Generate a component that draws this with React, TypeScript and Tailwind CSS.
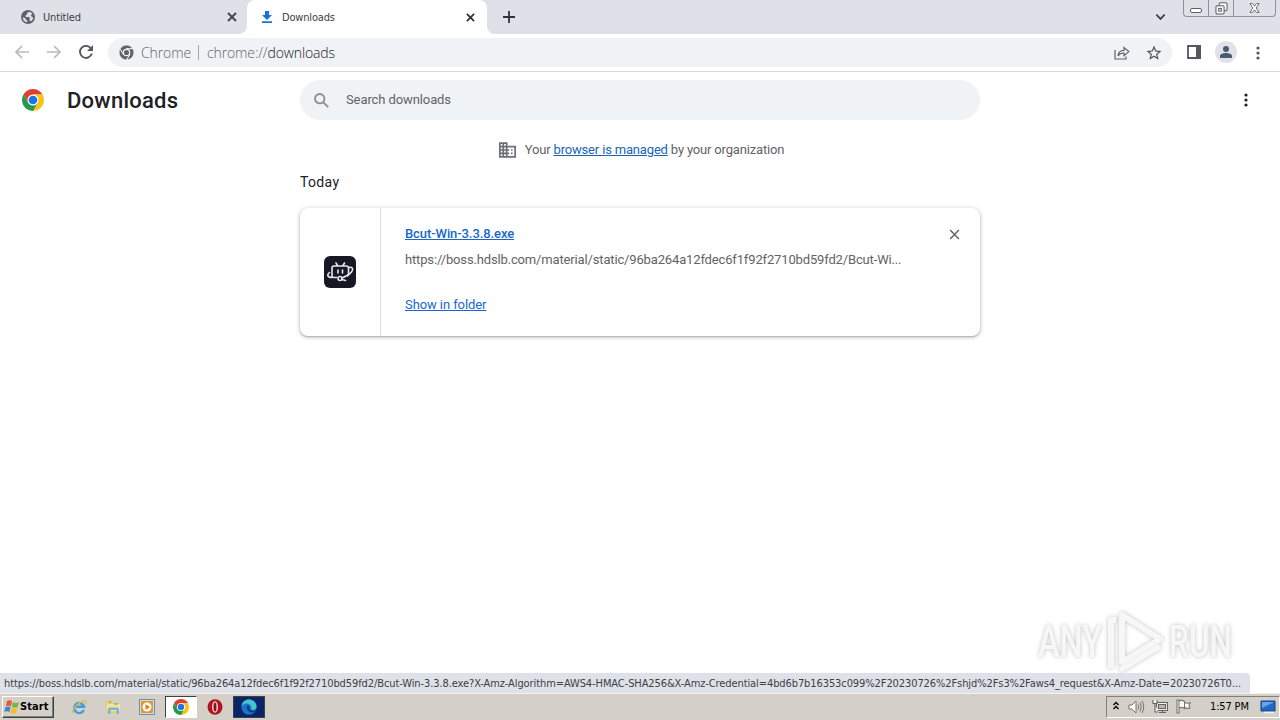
import React, { ReactNode } from 'react';

const SOURCE_URL = 'https://boss.hdslb.com/material/static/96ba264a12fdec6f1f92f2710bd59fd2/Bcut-Wi...';
const STATUS_URL =
  'https://boss.hdslb.com/material/static/96ba264a12fdec6f1f92f2710bd59fd2/Bcut-Win-3.3.8.exe?X-Amz-Algorithm=AWS4-HMAC-SHA256&X-Amz-Credential=4bd6b7b16353c099%2F20230726%2Fshjd%2Fs3%2Faws4_request&X-Amz-Date=20230726T0...';

const ChromeLogo: React.FC<{ className?: string; mono?: boolean }> = ({ className = '', mono }) => {
  const colors = mono ? ['#5f6368', '#5f6368', '#5f6368', '#5f6368'] : ['#dd3f31', '#fbc116', '#23994a', '#1a73e8'];
  const gap = mono ? '#f1f3f4' : 'none';
  const blade = 'M4.95 13A22 22 0 0 1 43.05 13H24L14.47 29.5Z';
  return (
    <svg viewBox="2 2 44 44" className={className}>
      <path d={blade} fill={colors[0]} stroke={gap} strokeWidth="2.5" />
      <path d={blade} fill={colors[1]} stroke={gap} strokeWidth="2.5" transform="rotate(120 24 24)" />
      <path d={blade} fill={colors[2]} stroke={gap} strokeWidth="2.5" transform="rotate(240 24 24)" />
      <circle cx="24" cy="24" r="11" fill={mono ? '#f1f3f4' : '#fff'} />
      <circle cx="24" cy="24" r={mono ? 7.5 : 8.7} fill={colors[3]} />
    </svg>
  );
};

const Cross: React.FC<{ className?: string; width?: number }> = ({ className = '', width = 2 }) => (
  <svg viewBox="0 0 10 10" className={className} fill="none" stroke="currentColor" strokeWidth={width}>
    <path d="M1 1L9 9M9 1L1 9" />
  </svg>
);

const Dots: React.FC<{ className?: string }> = ({ className = '' }) => (
  <svg viewBox="0 0 4 14" className={className} fill="currentColor">
    <circle cx="2" cy="2" r="1.6" />
    <circle cx="2" cy="7" r="1.6" />
    <circle cx="2" cy="12" r="1.6" />
  </svg>
);

const TabStrip = () => (
  <div className="relative flex h-[34px] shrink-0 bg-[#dee1e8] font-['DejaVu_Sans_Condensed','DejaVu_Sans',sans-serif] text-[11px] text-[#3c4043]">
    <div className="flex w-[247px] items-center pl-[21px] pr-[10px]">
      <svg viewBox="0 0 14 14" className="h-[14px] w-[14px]">
        <circle cx="7" cy="7" r="7" fill="#5f6368" />
        <path d="M8.2 1.7L6 3.3V4.6L4.4 5.5 4.8 7H8L9 8.5 8.3 10.2 10 11.3A5.4 5.4 0 0 0 12.3 7.5L10.6 6.8 9.8 5 11.5 3.9A5.4 5.4 0 0 0 8.2 1.7ZM1.7 7.3A5.3 5.3 0 0 0 6.4 12.3L6.3 10.7 4.6 9.5V8.3Z" fill="#dee1e8" />
      </svg>
      <span className="ml-2 flex-1 pt-[2px] tracking-[-0.15px]">Untitled</span>
      <Cross className="h-[10px] w-[10px] text-[#45494d]" />
    </div>
    <div className="relative flex w-[240px] items-center rounded-t-lg bg-white pl-[14px] pr-[12px]">
      <svg viewBox="0 0 8 8" className="absolute bottom-0 -left-2 h-2 w-2">
        <path d="M8 0V8H0A8 8 0 0 0 8 0Z" fill="#fff" />
      </svg>
      <svg viewBox="0 0 12 12" className="h-3 w-3" fill="#1a73d9">
        <path d="M4 0H8V4H11L6 9L1 4H4ZM1 10.3H11V12H1Z" />
      </svg>
      <span className="ml-[9px] flex-1 pt-[2px] tracking-[-0.18px]">Downloads</span>
      <Cross className="h-[9px] w-[9px] text-[#303338]" />
      <svg viewBox="0 0 8 8" className="absolute -right-2 bottom-0 h-2 w-2">
        <path d="M0 0V8H8A8 8 0 0 1 0 0Z" fill="#fff" />
      </svg>
    </div>
    <svg viewBox="0 0 12 12" className="mt-[11px] ml-4 h-3 w-3" fill="none" stroke="#2f3237" strokeWidth="1.8">
      <path d="M6 0V12M0 6H12" />
    </svg>
    <svg viewBox="0 0 12 8" className="mt-[13px] mr-[17px] ml-auto h-[8px] w-[11px]" fill="none" stroke="#3c4043" strokeWidth="2">
      <path d="M1.5 1.5L6 6L10.5 1.5" />
    </svg>
    <div className="mr-1 flex h-[17px] w-[93px] rounded-b-[4px] border border-t-0 border-[#8e9299]">
      <div className="flex w-[25px] justify-center border-r border-[#8e9299]">
        <span className="mt-[8px] h-[5px] w-3 rounded-[2px] border border-[#5d6167] bg-white" />
      </div>
      <div className="flex w-[25px] justify-center border-r border-[#8e9299]">
        <svg viewBox="0 0 14 14" className="mt-[2px] h-[13px] w-[13px]" fill="#f4f5f7" stroke="#5d6167" strokeWidth="1.1">
          <rect x="4.5" y="0.8" width="8.5" height="8.5" rx="1.3" />
          <rect x="1" y="4" width="8.8" height="8.8" rx="1.3" />
          <rect x="4" y="7" width="2.8" height="2.8" />
        </svg>
      </div>
      <div className="flex flex-1 justify-center">
        <svg viewBox="0 0 12 11" className="mt-[3px] h-[10px] w-[11px]" fill="#fff" stroke="#5d6167" strokeWidth="1">
          <path d="M1 .7H4L6 3.3 8 .7H11L7.9 5.5 11 10.3H8L6 7.7 4 10.3H1L4.1 5.5Z" />
        </svg>
      </div>
    </div>
  </div>
);

const Toolbar = () => (
  <div className="flex h-[38px] shrink-0 items-center border-b border-[#d8dadc] bg-white">
    <svg viewBox="0 0 14 14" className="-mt-px ml-[15px] h-[14px] w-[14px]" fill="none" stroke="#b8babd" strokeWidth="1.7">
      <path d="M14 7H1.5M7 1L1 7L7 13" />
    </svg>
    <svg viewBox="0 0 14 14" className="-mt-px ml-[18px] h-[14px] w-[14px]" fill="none" stroke="#b8babd" strokeWidth="1.7">
      <path d="M0 7H12.5M7 1L13 7L7 13" />
    </svg>
    <svg viewBox="0 0 14 14" className="-mt-px ml-[18px] h-[14px] w-[14px]">
      <path d="M11.6 3A6 6 0 1 0 12.8 8.6" fill="none" stroke="#54585d" strokeWidth="1.9" />
      <path d="M14 0V6H8Z" fill="#54585d" />
    </svg>
    <div className="ml-[15px] flex h-[29px] w-[1064px] items-center rounded-full bg-[#f0f3f5] pl-[11px] font-['Open_Sans','Noto_Sans',sans-serif] text-[14px] font-light text-[#5f6368]">
      <ChromeLogo mono className="h-[15px] w-[15px]" />
      <span className="ml-[7px] w-[50px] tracking-[-0.1px] whitespace-nowrap">Chrome</span>
      <span className="ml-[7px] h-[15px] w-px bg-[#a5a8ac]" />
      <span className="ml-2 flex-1 tracking-[-0.12px]">
        chrome://<span className="text-[#202124]">downloads</span>
      </span>
      <svg viewBox="0 0 16 14" className="h-[14px] w-4" fill="none" stroke="#5f6368" strokeWidth="1.2">
        <path d="M1 4V13H12V10.5M4 10C4.3 6.5 6.5 4.5 10 4.4V1.5L14.8 5.6 10 9.6V7C7.3 7 5.3 8 4 10Z" />
      </svg>
      <svg viewBox="0 0 24 24" className="ml-[15px] mr-[9px] h-[18px] w-[18px]" fill="#4f5358">
        <path d="M22 9.24l-7.19-.62L12 2 9.19 8.63 2 9.24l5.46 4.73L5.82 21 12 17.27 18.18 21l-1.63-7.03L22 9.24zM12 15.4l-3.76 2.27 1-4.28-3.32-2.88 4.38-.38L12 6.1l1.71 4.04 4.38.38-3.32 2.88 1 4.28L12 15.4z" />
      </svg>
    </div>
    <svg viewBox="0 0 14 14" className="-mt-px ml-[15px] h-[14px] w-[14px]">
      <path d="M1 1H13V13H1Z" fill="none" stroke="#54585d" strokeWidth="1.8" />
      <path d="M9 0H14V14H9Z" fill="#54585d" />
    </svg>
    <div className="-mt-px ml-[14px] flex h-[22px] w-[22px] items-center justify-center rounded-full bg-[#dfe2e6]">
      <svg viewBox="0 0 12 12" className="h-3 w-3" fill="#4c5a73">
        <circle cx="6" cy="3" r="3" />
        <path d="M0 12V10C0 8 3 7 6 7S12 8 12 10V12Z" />
      </svg>
    </div>
    <Dots className="ml-[19px] h-[14px] w-1 text-[#54585d]" />
  </div>
);

const DownloadCard = () => (
  <div className="mt-[15px] flex h-32 rounded-lg bg-white shadow-[0_1px_2px_rgba(60,64,67,0.35),0_1px_4px_1px_rgba(60,64,67,0.18)]">
    <div className="flex w-[81px] items-center justify-center border-r border-[#dadce0]">
      <svg viewBox="0 0 32 32" className="h-8 w-8" fill="none" stroke="#e8e9ef" strokeWidth="1.6" strokeLinecap="round" strokeLinejoin="round">
        <rect width="32" height="32" rx="6" fill="#171824" stroke="none" />
        <path d="M12 7L13.5 9.5M20.500 7L19 9.5M12.500 21.500H10Q8 21.500 8 19.500V12Q8 10 10 10H22Q24.500 10 24.500 12V18Q24.500 19.500 23.500 20M14 14V17M18.500 14V17" />
        <path d="M5.500 16.500C2.500 19 3.500 21.500 8 21.500M25 11.500C29 10.500 29.500 13.500 27.500 16C26 18 24 19.500 21 20.500" />
        <circle cx="16" cy="22.500" r="2" />
        <path d="M18 22L21 20.500M18 23.500L21.500 24.500" />
      </svg>
    </div>
    <div className="flex flex-1 flex-col pl-6 text-[13px]">
      <div className="flex h-[52px] items-center justify-between pr-[20px]">
        <a className="font-medium tracking-[-0.09px] text-[#1967c8] underline">Bcut-Win-3.3.8.exe</a>
        <Cross width={1.3} className="h-[11px] w-[11px] text-[#5f6368]" />
      </div>
      <span className="-mt-2 h-5 leading-[16px] tracking-[-0.15px] whitespace-nowrap text-[#5f6368]">{SOURCE_URL}</span>
      <a className="mt-[25px] self-start leading-[16px] tracking-[-0.09px] text-[#1967d2] underline">Show in folder</a>
    </div>
  </div>
);

const DownloadsPage = () => (
  <main className="relative flex-1 bg-white font-['Roboto',sans-serif]">
    <header className="flex h-14 items-center">
      <div className="flex w-[300px] items-center pl-[22px]">
        <ChromeLogo className="h-[22px] w-[22px]" />
        <h1 className="ml-[23px] text-[22px] font-medium tracking-[0.25px] text-[#202124]">Downloads</h1>
      </div>
      <div className="flex h-10 w-[680px] items-center rounded-full bg-[#f0f3f5] pl-[14px]">
        <svg viewBox="0 0 15 15" className="h-[15px] w-[15px]" fill="none" stroke="#8d9195" strokeWidth="1.9">
          <circle cx="5.700" cy="5.700" r="4.700" />
          <path d="M9 9L14.200 14.200" />
        </svg>
        <span className="ml-[17px] text-[13px] tracking-[-0.1px] text-[#5f6368]">Search downloads</span>
      </div>
      <Dots className="mr-8 ml-auto h-[14px] w-1 text-[#202124]" />
    </header>
    <div className="mx-auto w-[680px]">
      <div className="flex h-11 items-center justify-center pl-[3px] text-[13px] tracking-[-0.17px] text-[#5f6368]">
        <svg viewBox="2 3 20 18" className="mr-[9px] h-[16px] w-[17px]" fill="#6c7075">
          <path d="M12 7V3H2v18h20V7H12zM6 19H4v-2h2v2zm0-4H4v-2h2v2zm0-4H4V9h2v2zm0-4H4V5h2v2zm4 12H8v-2h2v2zm0-4H8v-2h2v2zm0-4H8V9h2v2zm0-4H8V5h2v2zm10 12h-8v-2h2v-2h-2v-2h2v-2h-2V9h8v10zm-2-8h-2v2h2v-2zm0 4h-2v2h2v-2z" />
        </svg>
        <span className="whitespace-pre">Your <a className="text-[#1a64b8] underline">browser is managed</a> by your organization</span>
      </div>
      <h2 className="h-[21px] text-[14px] leading-[21px] font-normal tracking-[0.35px] text-[#202124]">Today</h2>
      <DownloadCard />
    </div>

    {/* watermark and link status float over the page */}
    <svg viewBox="0 0 210 68" className="absolute right-[38px] bottom-[16px] h-[68px] w-[210px] overflow-visible drop-shadow-[0_0_2px_rgba(0,0,0,0.25)]">
      <g fill="#f7f7f7" fontFamily="Roboto, sans-serif" fontSize="45" fontWeight="500">
        <text x="6" y="48" textLength="64" lengthAdjust="spacingAndGlyphs">ANY</text>
        <text x="137" y="48" textLength="63" lengthAdjust="spacingAndGlyphs">RUN</text>
      </g>
      <g fill="none" stroke="#f7f7f7" strokeWidth="6" strokeLinejoin="round">
        <path d="M90 6L128 30L90 53Z" />
        <path d="M84 11H79V59M88 61L128 37" />
      </g>
    </svg>
    <div className="absolute bottom-0 left-0 h-5 w-[1250px] overflow-hidden rounded-tr bg-[#dee1e8] pl-1 font-['DejaVu_Sans_Condensed','DejaVu_Sans',sans-serif] text-[11px] leading-[21px] tracking-[-0.093px] whitespace-nowrap text-[#3c4043]">
      {STATUS_URL}
    </div>
  </main>
);

const TaskItem: React.FC<{ children: ReactNode; className?: string }> = ({ children, className = '' }) => (
  <div className={`flex h-[22px] w-8 items-center justify-center border ${className}`}>{children}</div>
);

const Taskbar = () => (
  <footer className="flex h-[27px] shrink-0 items-center border-t border-[#f5f3ef] bg-[#d4d0c8] pb-px pl-[2px]">
    <div className="flex h-[22px] w-[52px] items-center border border-t-white border-r-[#404040] border-b-[#404040] border-l-white pl-[1px] shadow-[inset_-1px_-1px_0_#808080]">
      <svg viewBox="0 0 16 16" className="h-4 w-4 shrink-0">
        <path d="M3 2Q6 .5 8 2.500L6.800 7.300Q4.500 5.800 1.800 7Z" fill="#e9592b" />
        <path d="M9 3Q12 4.800 15 3L13.600 8Q11 9.300 7.800 7.700Z" fill="#76b843" />
        <path d="M1.500 8Q4.500 6.800 6.500 8.300L5.300 13Q3 11.500.200 12.800Z" fill="#3a86d0" />
        <path d="M7.500 8.800Q10.500 10.300 13.300 9L12 14Q9 15.300 6.200 13.700Z" fill="#f6bd2b" />
      </svg>
      <span className="pt-[2px] font-['DejaVu_Sans_Condensed','DejaVu_Sans',sans-serif] text-[11px] font-bold tracking-[0.1px] text-black">Start</span>
    </div>
    <TaskItem className="ml-[9px] border-transparent">
      <svg viewBox="0 0 16 16" className="h-4 w-4" fill="none">
        <path d="M12.800 11A5 5 0 1 1 13 7.700H5" stroke="#3ca0dd" strokeWidth="2.400" />
        <path d="M2 14C-.500 11 9 1.500 14 1.800C15.500 2 15 4 14 5.500" stroke="#e5bb45" strokeWidth="1.200" />
      </svg>
    </TaskItem>
    <TaskItem className="ml-[2px] border-transparent">
      <svg viewBox="0 0 16 16" className="h-4 w-4">
        <path d="M1 2H7L8 4H14V14H1Z" fill="#ebcc6b" />
        <path d="M2 5H15V12H2Z" fill="#f6e29a" />
        <path d="M3 15V10Q3 8.500 5 8.500H12Q14 8.500 14 10V15H11.500V11H5.500V15Z" fill="#75b8de" />
        <path d="M4 3H6M9 5H13" stroke="#58a566" />
      </svg>
    </TaskItem>
    <TaskItem className="ml-[2px] border-transparent">
      <svg viewBox="0 0 16 16" className="h-4 w-4">
        <rect x=".5" y=".5" width="15" height="15" fill="#c6e0f2" stroke="#5f93bb" />
        <rect x="2" y="2" width="12" height="12" rx="1" fill="#f29321" />
        <circle cx="8" cy="8" r="4.500" fill="#fff" />
        <path d="M6.500 5.300L11 8L6.500 10.700Z" fill="#e47514" />
      </svg>
    </TaskItem>
    <TaskItem className="ml-[2px] border-t-[#404040] border-r-white border-b-white border-l-[#404040] bg-white">
      <ChromeLogo className="h-4 w-4" />
    </TaskItem>
    <TaskItem className="ml-[2px] border-transparent">
      <svg viewBox="0 0 16 16" className="h-4 w-4">
        <ellipse cx="8" cy="8" rx="7.500" ry="7.700" fill="#b5121f" />
        <ellipse cx="8" cy="8" rx="3" ry="5.800" fill="#e8dedc" />
        <ellipse cx="8" cy="8" rx="1.500" ry="4.600" fill="#8f1019" />
      </svg>
    </TaskItem>
    <TaskItem className="ml-[2px] border-[#404040] bg-[#0a246a]">
      <svg viewBox="0 0 16 16" className="h-4 w-4">
        <circle cx="8" cy="8" r="7.700" fill="#1975c5" />
        <path d="M.600 7.500C1 2.500 4.500.500 8 .500C13 .500 15.500 4.500 15.500 7.500C15.500 10 13 11.500 10 10.500C11.500 7 8.500 4.500 5.500 4.500C3.500 4.500 1.500 5.500.600 7.500Z" fill="#43c5cb" />
        <path d="M6 7C5 10 7 13.500 12.500 13.500C14 12.500 14.500 11.500 14.500 11C12 12.500 8.500 11.500 8.500 8.500C8.500 6.500 6.500 6 6 7Z" fill="#0b3c84" />
      </svg>
    </TaskItem>
    <div className="ml-auto flex h-[22px] w-[174px] items-center border border-t-[#808080] border-r-white border-b-white border-l-[#808080] pr-[3px] pl-[6px]">
      <svg viewBox="0 0 6 8" className="-mt-[2px] h-[9px] w-[6px] shrink-0" fill="none" stroke="#000" strokeWidth="1.300">
        <path d="M.500 3.500L3 1L5.500 3.500M.500 7.500L3 5L5.500 7.500" />
      </svg>
      <svg viewBox="0 0 17 14" className="ml-[9px] h-[14px] w-[17px] shrink-0" fill="none" stroke="#77756f">
        <path d="M1 5H4L8 1V13L4 9H1Z" fill="#fff" />
        <path d="M10 4.500Q11.500 7 10 9.500M12 2.500Q14.500 7 12 11.500M14 1Q17.500 7 14 13" />
      </svg>
      <svg viewBox="0 0 16 15" className="ml-[7px] h-[15px] w-4 shrink-0" fill="#f6f5f2" stroke="#66645f" strokeWidth="1.100">
        <rect x="4.500" y="3.500" width="11" height="8" />
        <path d="M6.500 5.500H13.500V9.500H6.500Z" fill="#bbb9b2" />
        <path d="M7 13.500H14M10.500 11.500V13.500M1 1V4.500H5V1M3 4.500V13H6" />
      </svg>
      <svg viewBox="0 0 16 15" className="ml-[8px] h-[15px] w-4 shrink-0" fill="#fff" stroke="#77756f" strokeWidth="1.100">
        <path d="M1 1H3V14H1ZM3 2Q6 .500 8.500 2.500V9.500Q6 7.500 3 9ZM8.500 3.500Q11 5 14.500 3.500Q12 6 14 9Q11 10 8.500 8.500Z" />
      </svg>
      <span className="ml-[18px] pt-[2px] font-['DejaVu_Sans_Condensed','DejaVu_Sans',sans-serif] text-[11px] tracking-[-0.15px] whitespace-nowrap text-black">1:57 PM</span>
      <svg viewBox="0 0 16 14" className="ml-auto h-[14px] w-4 shrink-0">
        <path d="M1 1H15V11H1Z" fill="#2468c7" stroke="#183f82" />
        <path d="M2 2H14L2 8Z" fill="#66a7ec" />
        <path d="M4 12.500H14" stroke="#eef2f7" strokeWidth="1.500" />
      </svg>
    </div>
  </footer>
);

export default function App() {
  return (
    <div className="flex h-[720px] w-[1280px] flex-col overflow-hidden bg-white">
      <TabStrip />
      <Toolbar />
      <DownloadsPage />
      <Taskbar />
    </div>
  );
}
